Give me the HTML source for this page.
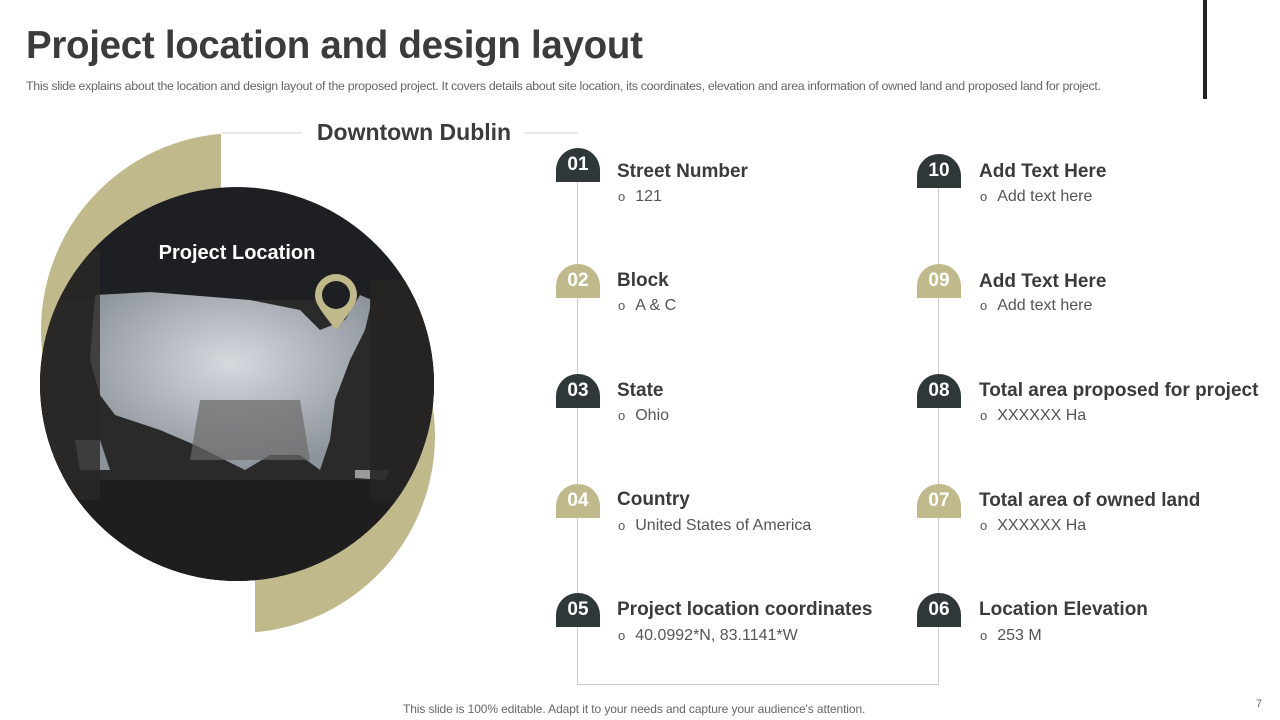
<!DOCTYPE html>
<html><head><meta charset="utf-8"><style>
*{margin:0;padding:0;box-sizing:border-box}
body{width:1280px;height:720px;background:#fff;position:relative;overflow:hidden;font-family:"Liberation Sans",sans-serif}
.abs{position:absolute}
h1{position:absolute;left:26px;top:24px;font-size:38.5px;font-weight:bold;color:#3b3b3b;letter-spacing:-0.3px}
.sub{left:26px;top:79px;font-size:12.4px;color:#666;white-space:nowrap;letter-spacing:-0.3px}
.badge{position:absolute;width:44px;height:34px;border-radius:22px 22px 0 0;color:#fff;font-weight:bold;font-size:19px;text-align:center;line-height:34px}
.d{background:#2f3739}.g{background:#c0b98b}
.h{position:absolute;font-size:19px;font-weight:bold;color:#3b3b3b;white-space:nowrap}
.t{position:absolute;font-size:16px;color:#555;white-space:nowrap}
.t span{font-size:13px;margin-left:3px;margin-right:10px}
</style></head><body>
<h1>Project location and design layout</h1>
<div class="abs sub">This slide explains about the location and design layout of the proposed project. It covers details about site location, its coordinates, elevation and area information of owned land and proposed land for project.</div>
<div class="abs" style="left:1203px;top:0;width:4px;height:99px;background:#222"></div>

<svg class="abs" style="left:0;top:0" width="600" height="700">
<defs>
<clipPath id="tl"><rect x="0" y="0" width="221" height="384"/></clipPath>
<clipPath id="br"><rect x="255" y="384" width="400" height="400"/></clipPath>
<clipPath id="c"><circle cx="237" cy="384" r="197"/></clipPath>
<radialGradient id="sky" cx="0.5" cy="0.4" r="0.6"><stop offset="0" stop-color="#d5dadf"/><stop offset="1" stop-color="#8d939a"/></radialGradient>
</defs>
<line x1="221" y1="133" x2="302" y2="133" stroke="#d6d6d6"/>
<line x1="524" y1="133" x2="578" y2="133" stroke="#d6d6d6"/>
<circle cx="238" cy="330" r="197" fill="#c0b98b" clip-path="url(#tl)"/>
<circle cx="238" cy="436" r="197" fill="#c0b98b" clip-path="url(#br)"/>
<circle cx="237" cy="384" r="197" fill="#1d1f22"/>
<g clip-path="url(#c)">
<rect x="40" y="300" width="400" height="300" fill="#2a2a2a"/>
<path d="M95 295 L150 292 L250 300 L300 310 L320 330 L345 320 L360 295 L372 300 L365 330 L350 360 L335 400 L330 440 L320 470 L300 455 L270 455 L245 470 L225 460 L195 445 L160 430 L115 415 L100 395 L90 360 Z" fill="url(#sky)"/>
<path d="M75 440 L100 440 L110 470 L80 470 Z" fill="#8d939a"/>
<path d="M355 470 L390 470 L385 480 L355 478 Z" fill="#9a9a9a"/>
<path d="M200 400 L300 400 L310 460 L190 460 Z" fill="#6a6a6a" opacity="0.7"/>
<rect x="40" y="480" width="400" height="120" fill="#1e1e1e"/>
<rect x="40" y="250" width="60" height="250" fill="#2b2826" opacity="0.8"/>
<rect x="370" y="280" width="70" height="220" fill="#252322" opacity="0.9"/>
</g>
<text x="237" y="259" text-anchor="middle" font-family="Liberation Sans" font-weight="bold" font-size="20" fill="#fff">Project Location</text>
<path d="M336 330 C322 312 315 304 315 295 A21 21 0 0 1 357 295 C357 304 350 312 336 330 Z" fill="#c0b98b"/>
<circle cx="336" cy="295" r="14" fill="#1d1f22"/>
</svg>
<div class="abs" style="left:304px;top:119px;width:220px;text-align:center;font-size:23px;font-weight:bold;color:#3b3b3b">Downtown Dublin</div>

<div class="abs" style="left:577px;top:182px;width:1px;height:502px;background:#ccc"></div>
<div class="abs" style="left:577px;top:684px;width:362px;height:1px;background:#ccc"></div>
<div class="abs" style="left:938px;top:188px;width:1px;height:497px;background:#ccc"></div>

<div class="badge d" style="left:556px;top:148px">01</div>
<div class="badge g" style="left:556px;top:264px">02</div>
<div class="badge d" style="left:556px;top:374px">03</div>
<div class="badge g" style="left:556px;top:484px">04</div>
<div class="badge d" style="left:556px;top:593px">05</div>
<div class="badge d" style="left:917px;top:154px">10</div>
<div class="badge g" style="left:917px;top:264px">09</div>
<div class="badge d" style="left:917px;top:374px">08</div>
<div class="badge g" style="left:917px;top:484px">07</div>
<div class="badge d" style="left:917px;top:593px">06</div>

<div class="h" style="left:617px;top:161px">Street Number</div><div class="t" style="left:615px;top:188px"><span>o</span>121</div>
<div class="h" style="left:617px;top:270px">Block</div><div class="t" style="left:615px;top:297px"><span>o</span>A &amp; C</div>
<div class="h" style="left:617px;top:380px">State</div><div class="t" style="left:615px;top:407px"><span>o</span>Ohio</div>
<div class="h" style="left:617px;top:489px">Country</div><div class="t" style="left:615px;top:517px"><span>o</span>United States of America</div>
<div class="h" style="left:617px;top:599px">Project location coordinates</div><div class="t" style="left:615px;top:627px"><span>o</span>40.0992*N, 83.1141*W</div>

<div class="h" style="left:979px;top:161px">Add Text Here</div><div class="t" style="left:977px;top:188px"><span>o</span>Add text here</div>
<div class="h" style="left:979px;top:271px">Add Text Here</div><div class="t" style="left:977px;top:297px"><span>o</span>Add text here</div>
<div class="h" style="left:979px;top:380px">Total area proposed for project</div><div class="t" style="left:977px;top:407px"><span>o</span>XXXXXX Ha</div>
<div class="h" style="left:979px;top:490px">Total area of owned land</div><div class="t" style="left:977px;top:517px"><span>o</span>XXXXXX Ha</div>
<div class="h" style="left:979px;top:599px">Location Elevation</div><div class="t" style="left:977px;top:627px"><span>o</span>253 M</div>

<div class="abs" style="left:403px;top:702px;font-size:12px;color:#666;white-space:nowrap;letter-spacing:-0.1px">This slide is 100% editable. Adapt it to your needs and capture your audience's attention.</div>
<div class="abs" style="left:1256px;top:698px;font-size:11px;color:#666">7</div>
</body></html>
